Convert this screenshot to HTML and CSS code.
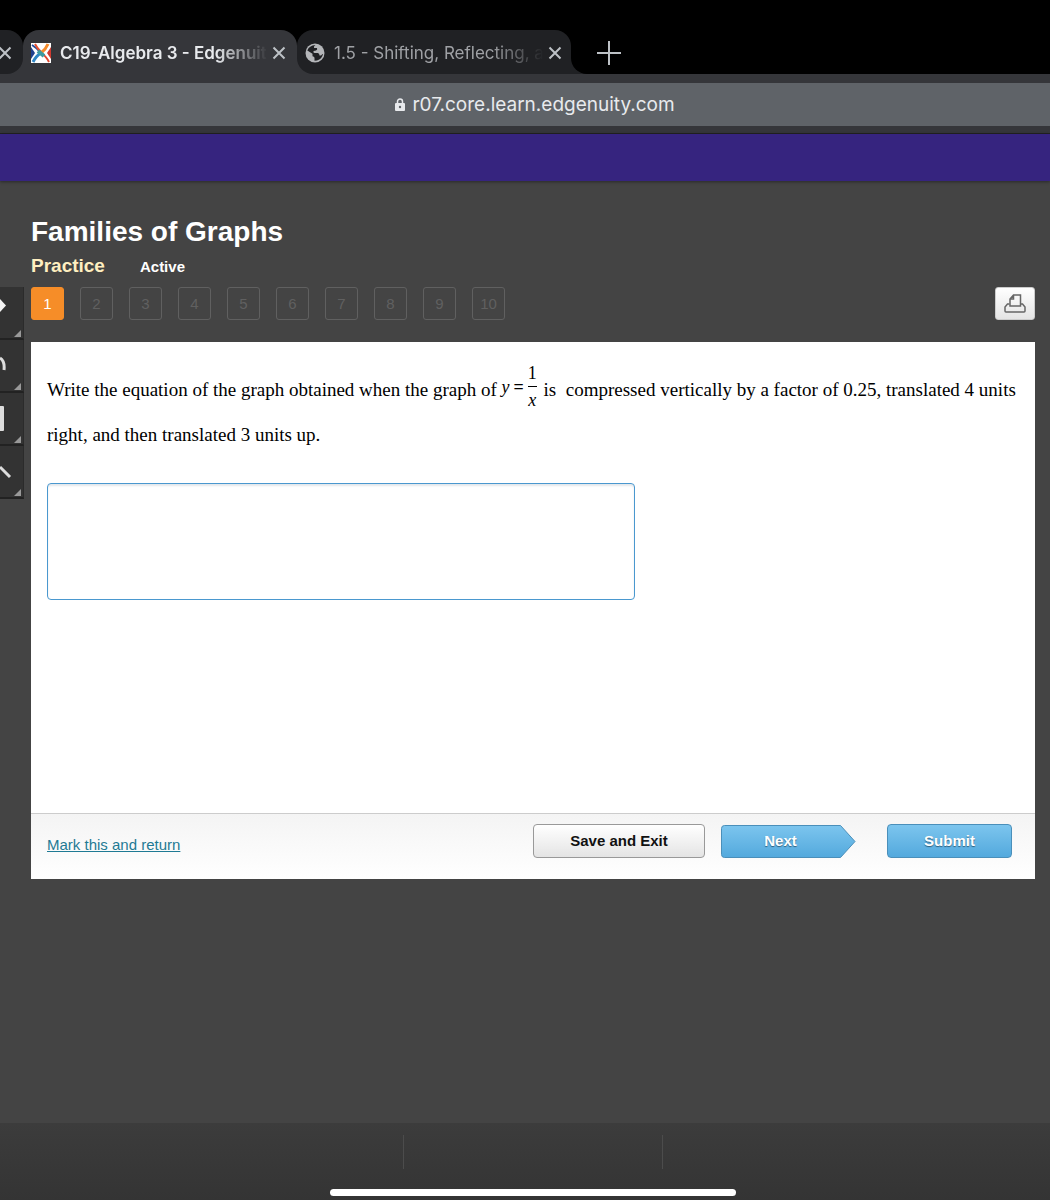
FILE: index.html
```html
<!DOCTYPE html>
<html lang="en">
  <head>
    <meta charset="UTF-8" />
    <meta name="viewport" content="width=device-width, initial-scale=1.0" />
    <title>C19-Algebra 3 - Edgenuity</title>
    <link rel="stylesheet" href="styles.css">
  </head>
  <body>
    <header class="browser">
      <div class="tabs">
        <div class="tab tab-cut">
          <button class="tab-close" aria-label="Close tab">
            <svg width="14" height="14" viewBox="0 0 14 14"><path d="M1.5 1.5l11 11M12.5 1.5l-11 11" /></svg>
          </button>
        </div>
        <div class="tab tab-active">
          <svg class="tab-icon" width="20" height="20" viewBox="0 0 20 20">
            <rect width="20" height="20" fill="#fff" />
            <path d="M0 4l4 6-4 6z" fill="#20408f" />
            <path d="M20 4l-4 6 4 6z" fill="#cf3a30" />
            <path d="M1 2q5 3 9 8" fill="none" stroke="#1f4fa0" stroke-width="2" />
            <path d="M4 1q2 4 6 8" fill="none" stroke="#e8502e" stroke-width="2" />
            <path d="M17 1q-2 5-7 9" fill="none" stroke="#f58a2a" stroke-width="3" />
            <path d="M10 10q-5 3-8 9" fill="none" stroke="#2f86c5" stroke-width="3" />
            <path d="M10 10q5 3 8 9" fill="none" stroke="#e2452c" stroke-width="2" />
            <path d="M7 8l6 5" fill="none" stroke="#3d9aa0" stroke-width="4" />
          </svg>
          <span class="tab-title">C19-Algebra 3 - Edgenuit</span>
          <button class="tab-close" aria-label="Close tab">
            <svg width="14" height="14" viewBox="0 0 14 14"><path d="M1.5 1.5l11 11M12.5 1.5l-11 11" /></svg>
          </button>
        </div>
        <div class="tab tab-last">
          <svg class="tab-icon" width="20" height="20" viewBox="0 0 20 20">
            <circle cx="10" cy="10" r="9.5" fill="#b4b6b9" />
            <path d="M10.500 2q-2 1.200-1.500 3h3q.8 1.800-1 2.500l-2.500.5q-.5 2 1 2h3.500q1.500.5 1.500 2.500h1.500l1.500-1.500h.5q-1 5-6 6.500l-2.500.3v-3q-.3-1.500-2-1.500v-2.500L2.300 7.500Q4 2.500 10.500 2z" fill="#202124" />
          </svg>
          <span class="tab-title">1.5 - Shifting, Reflecting, a</span>
          <button class="tab-close" aria-label="Close tab">
            <svg width="14" height="14" viewBox="0 0 14 14"><path d="M1.5 1.5l11 11M12.5 1.5l-11 11" /></svg>
          </button>
        </div>
        <div class="tabs-end">
          <div class="tabs-end-inner">
            <button class="new-tab" aria-label="New tab">
              <svg width="26" height="26" viewBox="0 0 26 26"><path d="M13 1v24M1 13h24" /></svg>
            </button>
          </div>
        </div>
      </div>
      <div class="address">
        <svg width="10" height="14" viewBox="0 0 10 14">
          <path d="M2.500 6V3.500a2.500 2.500 0 0 1 5 0V6" fill="none" stroke="#e8eaed" stroke-width="1.500" />
          <rect y="5" width="10" height="8" rx="1" fill="#e8eaed" />
          <circle cx="5" cy="9" r="1.200" fill="#5f6368" />
        </svg>
        <span>r07.core.learn.edgenuity.com</span>
      </div>
    </header>

    <div class="top-bar"></div>

    <main class="lesson">
      <nav class="tools" aria-label="Tools">
        <button class="tool" aria-label="Highlighter">
          <svg width="12" height="28" viewBox="0 0 12 28"><path d="M0 0l6 6.500L0 13z" fill="#f4f4f4" /></svg>
        </button>
        <button class="tool" aria-label="Audio">
          <svg width="12" height="28" viewBox="0 0 12 28"><path d="M0 6q5 3 4 12" fill="none" stroke="#ddd" stroke-width="3" /></svg>
        </button>
        <button class="tool" aria-label="Calculator">
          <svg width="12" height="28" viewBox="0 0 12 28"><path d="M0 1h3q1 0 1 1v23q0 1-1 1H0z" fill="#ddd" /></svg>
        </button>
        <button class="tool" aria-label="Pencil">
          <svg width="12" height="28" viewBox="0 0 12 28"><path d="M0 9l10 10" fill="none" stroke="#ddd" stroke-width="3" /></svg>
        </button>
      </nav>

      <section class="content">
        <h1>Families of Graphs</h1>
        <div class="status">
          <span class="status-type">Practice</span>
          <span class="status-state">Active</span>
        </div>
        <div class="questions">
          <button class="q current">1</button>
          <button class="q" disabled>2</button>
          <button class="q" disabled>3</button>
          <button class="q" disabled>4</button>
          <button class="q" disabled>5</button>
          <button class="q" disabled>6</button>
          <button class="q" disabled>7</button>
          <button class="q" disabled>8</button>
          <button class="q" disabled>9</button>
          <button class="q" disabled>10</button>
          <button class="print" aria-label="Print">
            <svg width="22" height="20" viewBox="0 0 22 20">
              <path d="M5.500 10h-2L1 13v4q0 1 1 1h18q1 0 1-1v-4l-2.500-3h-2" />
              <path d="M6 12V5l3.500-4H16.500v11zM6.500 5h3V1.500" />
            </svg>
          </button>
        </div>

        <div class="card">
          <div class="card-body">
            <label class="problem" for="answer">Write the equation of the graph obtained when the graph of <span class="math"><i>y</i><b>=</b><span class="frac"><span class="num">1</span><i class="den">x</i></span></span> is&nbsp; compressed vertically by a factor of 0.25, translated 4 units right, and then translated 3 units up.</label>
            <textarea id="answer"></textarea>
          </div>
          <div class="card-footer">
            <a href="#">Mark this and return</a>
            <button class="btn btn-save">Save and Exit</button>
            <button class="btn btn-next">
              <svg width="135" height="34" viewBox="0 0 135 34">
                <defs>
                  <linearGradient id="blue" x1="0" y1="0" x2="0" y2="1">
                    <stop offset="0" stop-color="#7cc5ee" />
                    <stop offset="1" stop-color="#53a9dd" />
                  </linearGradient>
                </defs>
                <path d="M3.500 1.500H119.500L134 17.500 119.500 33.500H3.500Q.5 33.500 .5 30.500V4.500Q.5 1.500 3.500 1.500z" fill="url(#blue)" stroke="#4a8fba" stroke-width="1" />
              </svg>
              <span>Next</span>
            </button>
            <button class="btn btn-submit">Submit</button>
          </div>
        </div>
      </section>
    </main>

    <footer class="bottom-bar">
      <div class="bottom-part"></div>
      <div class="bottom-part bottom-middle"></div>
      <div class="bottom-part"></div>
      <div class="home-line"></div>
    </footer>
  </body>
</html>
```
FILE: styles.css
```css
* {
  box-sizing: border-box;
}

body {
  margin: 0;
  min-height: 100vh;
  display: flex;
  flex-direction: column;
  background: #444;
  color: #fff;
  font-family: "Liberation Sans", Arial, sans-serif;
}

button {
  font-family: inherit;
  padding: 0;
  border: none;
  background: none;
  cursor: pointer;
}

svg {
  display: block;
  flex: none;
}

/* Browser tabs */

.browser {
  background: #35363a;
  padding-bottom: 7px;
  border-bottom: 1px solid #222;
  font-family: Inter, sans-serif;
}

.tabs {
  display: flex;
  height: 74px;
  padding-top: 30px;
  background: linear-gradient(#000 52px, #35363a 52px);
}

.tab {
  display: flex;
  align-items: center;
  width: 274px;
  padding: 2px 11px 0 8px;
  border-radius: 16px;
  background: #202124;
  color: #9fa1a5;
  font-size: 17px;
}

.tab-cut {
  width: 23px;
  padding-left: 0;
  border-radius: 0 16px 16px 0;
}

.tab-active {
  border-radius: 16px 16px 0 0;
  background: #35363a;
  color: #e8eaed;
  font-weight: 600;
}

.tab-last {
  border-radius: 16px 16px 0 16px;
}

.tab-title {
  flex: 1;
  margin: 0 4px 0 9px;
  white-space: nowrap;
  -webkit-mask-image: linear-gradient(to right, #000 75%, transparent);
  mask-image: linear-gradient(to right, #000 75%, transparent);
}

.tab-close svg {
  stroke: #bdc1c6;
  stroke-width: 2;
}

.tab-cut .tab-close svg {
  margin-left: -2px;
}

.tabs-end {
  flex: 1;
  background: linear-gradient(#000 22px, #202124 22px);
}

.tabs-end-inner {
  height: 100%;
  padding: 10px 25px;
  border-radius: 0 0 0 16px;
  background: #000;
}

.new-tab svg {
  stroke: #bdc1c6;
  stroke-width: 2;
}

.address {
  display: flex;
  align-items: center;
  justify-content: center;
  gap: 7px;
  height: 43px;
  margin-top: 9px;
  padding: 0 20px 0 40px;
  background: #5f6368;
  color: #e8eaed;
  font-size: 19px;
}

.top-bar {
  height: 47px;
  background: #36247f;
  box-shadow: 0 1px 3px rgba(0, 0, 0, 0.4);
}

/* Lesson */

.lesson {
  flex: 1;
  display: flex;
  gap: 7px;
  padding-right: 15px;
}

.tools {
  width: 24px;
  margin-top: 106px;
}

.tool {
  display: block;
  position: relative;
  width: 24px;
  height: 53px;
  background: #333;
  border-bottom: 2px solid #222;
  border-right: 1px solid #2b2b2b;
}

.tool::after {
  content: "";
  position: absolute;
  right: 2px;
  bottom: 1px;
  border-left: 7px solid transparent;
  border-bottom: 7px solid #999;
}

.content {
  flex: 1;
  padding-top: 32px;
}

h1 {
  margin: 0;
  font-size: 28px;
  line-height: 38px;
}

.status {
  display: flex;
  align-items: baseline;
  gap: 35px;
  height: 36px;
  padding-top: 4px;
  font-weight: bold;
}

.status-type {
  color: #ffefc0;
  font-size: 19px;
}

.status-state {
  font-size: 15px;
}

.questions {
  display: flex;
  gap: 16px;
  margin-bottom: 22px;
}

.q {
  width: 33px;
  height: 33px;
  border: 1px solid #606060;
  border-radius: 3px;
  color: #606060;
  font-size: 15px;
}

.q.current {
  border-color: #f68d28;
  background: #f68d28;
  color: #fff;
}

.print {
  display: flex;
  align-items: center;
  justify-content: center;
  width: 40px;
  height: 33px;
  margin-left: auto;
  border: 1px solid #ccc;
  border-radius: 3px;
  background: linear-gradient(#fff, #e4e4e4);
}

.print svg {
  fill: none;
  stroke: #666;
  stroke-width: 1.5;
}

.card {
  background: #fff;
}

.card-body {
  min-height: 471px;
  padding: 25px 16px 0;
}

.problem {
  display: block;
  color: #000;
  font-family: "Liberation Serif", "Times New Roman", serif;
  font-size: 19px;
  line-height: 45px;
}

.math {
  display: inline-flex;
  align-items: center;
  gap: 4px;
  margin: -18px 2px -8px 0;
  vertical-align: middle;
  font-size: 18px;
  line-height: 26px;
}

.frac {
  display: flex;
  flex-direction: column;
  text-align: center;
}

.num {
  border-bottom: 1px solid #000;
}

textarea {
  display: block;
  width: 588px;
  max-width: 100%;
  height: 117px;
  margin-top: 26px;
  border: 1px solid #4a98cf;
  border-radius: 4px;
  box-shadow: inset 0 2px 2px #e4e8ec;
  resize: none;
  font-size: 16px;
}

.card-footer {
  display: flex;
  align-items: center;
  height: 66px;
  padding: 0 23px 12px 16px;
  border-top: 1px solid #ccc;
  background: linear-gradient(#f4f4f4, #fff);
}

.card-footer a {
  margin-right: auto;
  padding-top: 8px;
  color: #1f7a94;
  font-size: 15px;
}

.btn {
  height: 34px;
  border-radius: 4px;
  color: #fff;
  font-size: 15px;
  font-weight: bold;
  text-shadow: 0 1px 1px #2f5f7d;
}

.btn-save {
  width: 172px;
  margin-right: 16px;
  border: 1px solid #999;
  background: linear-gradient(#fff, #e4e4e4);
  color: #111;
  text-shadow: none;
}

.btn-next {
  display: grid;
  align-items: center;
  margin-right: 31px;
}

.btn-next svg,
.btn-next span {
  grid-area: 1 / 1;
}

.btn-next span {
  padding-right: 16px;
}

.btn-submit {
  width: 125px;
  border: 1px solid #4a8fba;
  background: linear-gradient(#7cc5ee, #53a9dd);
}

/* Bottom bar */

.bottom-bar {
  display: grid;
  grid-template-columns: 403fr 260fr 387fr;
  grid-template-rows: 54px 7px;
  height: 77px;
  padding-top: 12px;
  background: linear-gradient(#3c3c3c, #343434);
}

.bottom-part {
  height: 34px;
}

.bottom-middle {
  border-left: 1px solid #4c4c4c;
  border-right: 1px solid #4c4c4c;
}

.home-line {
  grid-column: 1 / -1;
  justify-self: center;
  width: 406px;
  height: 7px;
  margin-left: 16px;
  border-radius: 4px;
  background: #fff;
}
```
